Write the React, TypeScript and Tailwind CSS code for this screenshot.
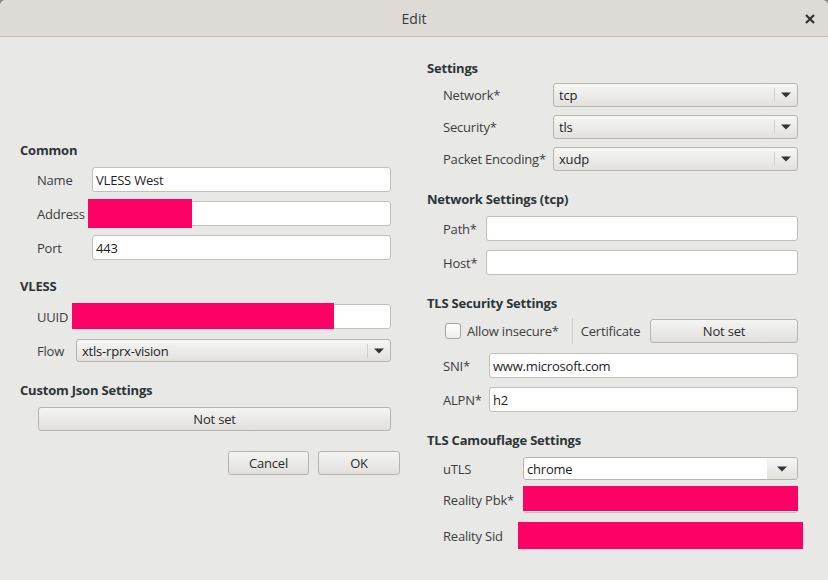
import type { ReactNode } from "react"

const font = { fontFamily: '"Open Sans", "Noto Sans", "DejaVu Sans", sans-serif' }

function Header({ children, className = "" }: { children: ReactNode; className?: string }) {
  return (
    <div className={`h-4 leading-4 text-[13px] font-bold tracking-[-0.2px] text-[#2e3436] ${className}`}>{children}</div>
  )
}

function Label({ children, w }: { children: ReactNode; w: string }) {
  return (
    <div className={`${w} relative top-px shrink-0 whitespace-nowrap text-[13px] tracking-[-0.2px] text-[#3d3d3d]`}>
      {children}
    </div>
  )
}

function Input({ value = "", className = "" }: { value?: string; className?: string }) {
  return (
    <div className={`flex h-[25px] flex-1 items-center rounded-[3px] border border-[#c2beb9] bg-white pl-[3px] text-[13px] tracking-[-0.2px] text-[#1e1e1e] ${className}`}>
      <span className="relative top-px">{value}</span>
    </div>
  )
}

function Arrow() {
  return (
    <svg width="10" height="6" viewBox="0 0 10 6" className="shrink-0">
      <path d="M0 0.5 H10 L5 5.5 Z" fill="#2e3436" />
    </svg>
  )
}

function Combo({ value, className = "" }: { value: string; className?: string }) {
  return (
    <div className={`flex h-6 flex-1 items-center rounded-[3px] border border-[#b7b3ae] bg-linear-to-b from-[#f6f6f5] to-[#e2e1de] pl-[5px] text-[13px] tracking-[-0.2px] text-[#1e1e1e] ${className}`}>
      <span className="relative top-px">{value}</span>
      <span className="ml-auto h-[14px] w-px bg-[#d3cfca]" />
      <span className="mx-[6px] flex items-center">
        <Arrow />
      </span>
    </div>
  )
}

function Button({ children, className = "" }: { children: ReactNode; className?: string }) {
  return (
    <div className={`flex h-6 items-center justify-center rounded-[3px] border border-[#b7b3ae] bg-linear-to-b from-[#f4f4f3] to-[#e1e0dd] text-[13px] tracking-[-0.2px] text-[#2b2b2b] ${className}`}>
      <span className="relative top-px">{children}</span>
    </div>
  )
}

function Redacted({ className = "" }: { className?: string }) {
  return <div className={`bg-[#ff0066] ${className}`} />
}

export default function App() {
  return (
    <div style={font} className="h-[580px] w-[828px] overflow-hidden bg-[#8c8c8c]">
      <div className="flex h-full flex-col overflow-hidden rounded-t-[6px] bg-[#e8e8e7]">
        {/* Title bar */}
        <div className="relative flex h-[37px] shrink-0 items-center justify-center border-b border-[#c4bdb3] bg-[#dedbd7]">
          <span className="text-[14px] text-[#363a3c]">Edit</span>
          <svg width="10" height="10" viewBox="0 0 10 10" className="absolute right-[13px] top-[14px]">
            <path d="M1 1 L9 9 M9 1 L1 9" stroke="#2e3436" strokeWidth="2.2" />
          </svg>
        </div>

        <div className="flex flex-1 items-start">
          {/* Left column */}
          <div className="ml-5 flex w-[371px] flex-col pt-[105px]">
            <Header>Common</Header>
            <div className="mt-[9px] flex items-center pl-[17px]">
              <Label w="w-[55px]">Name</Label>
              <Input value="VLESS West" />
            </div>
            <div className="relative mt-[9px] flex items-center pl-[17px]">
              <Label w="w-[55px]">Address</Label>
              <Input />
              <Redacted className="absolute left-[68px] top-[-2px] h-[29px] w-[104px]" />
            </div>
            <div className="mt-[9px] flex items-center pl-[17px]">
              <Label w="w-[55px]">Port</Label>
              <Input value="443" />
            </div>

            <Header className="mt-[18px]">VLESS</Header>
            <div className="relative mt-[10px] flex items-center pl-[17px]">
              <Label w="w-[39px]">UUID</Label>
              <Input />
              <Redacted className="absolute left-[52px] top-[-1px] h-[26px] w-[262px]" />
            </div>
            <div className="mt-[10px] flex items-center pl-[17px]">
              <Label w="w-[39px]">Flow</Label>
              <Combo value="xtls-rprx-vision" className="h-[23px]" />
            </div>

            <Header className="mt-5">Custom Json Settings</Header>
            <div className="mt-[9px] pl-[18px]">
              <Button>Not set</Button>
            </div>

            <div className="-mr-[9px] mt-5 flex justify-end gap-[9px]">
              <Button className="w-[81px]">Cancel</Button>
              <Button className="w-[82px]">OK</Button>
            </div>
          </div>

          {/* Right column */}
          <div className="ml-[36px] flex w-[371px] flex-col pt-[23px]">
            <Header>Settings</Header>
            <div className="mt-[7px] flex items-center pl-4">
              <Label w="w-[110px]">Network*</Label>
              <Combo value="tcp" />
            </div>
            <div className="mt-2 flex items-center pl-4">
              <Label w="w-[110px]">Security*</Label>
              <Combo value="tls" />
            </div>
            <div className="mt-2 flex items-center pl-4">
              <Label w="w-[110px]">Packet Encoding*</Label>
              <Combo value="xudp" />
            </div>

            <Header className="mt-5">Network Settings (tcp)</Header>
            <div className="mt-[9px] flex items-center pl-4">
              <Label w="w-[43px]">Path*</Label>
              <Input />
            </div>
            <div className="mt-[9px] flex items-center pl-4">
              <Label w="w-[43px]">Host*</Label>
              <Input />
            </div>

            <Header className="mt-5">TLS Security Settings</Header>
            <div className="mt-2 flex h-6 items-center pl-[18px]">
              <span className="h-4 w-4 shrink-0 rounded-[3px] border border-[#a9a5a0] bg-linear-to-b from-white to-[#eeeeec]" />
              <span className="relative top-px ml-[6px] text-[13px] tracking-[-0.2px] text-[#3d3d3d]">Allow insecure*</span>
              <span className="ml-[13px] h-[26px] w-px bg-[#cfcbc6]" />
              <span className="relative top-px ml-2 text-[13px] tracking-[-0.2px] text-[#3d3d3d]">Certificate</span>
              <Button className="ml-auto w-[148px]">Not set</Button>
            </div>
            <div className="mt-[10px] flex items-center pl-4">
              <Label w="w-[46px]">SNI*</Label>
              <Input value="www.microsoft.com" />
            </div>
            <div className="mt-[9px] flex items-center pl-4">
              <Label w="w-[46px]">ALPN*</Label>
              <Input value="h2" />
            </div>

            <Header className="mt-5">TLS Camouflage Settings</Header>
            <div className="mt-[9px] flex items-center pl-4">
              <Label w="w-[80px]">uTLS</Label>
              <div className="flex h-[23px] flex-1 overflow-hidden rounded-[3px] border border-[#b7b3ae] text-[13px] tracking-[-0.2px] text-[#1e1e1e]">
                <div className="flex flex-1 items-center bg-white pl-[3px]">
                  <span className="relative top-px">chrome</span>
                </div>
                <div className="flex w-[30px] items-center justify-center bg-linear-to-b from-[#f6f6f5] to-[#e2e1de]">
                  <Arrow />
                </div>
              </div>
            </div>
            <div className="relative mt-[6px] flex items-center pl-4">
              <Label w="w-[80px]">Reality Pbk*</Label>
              <Input className="h-[27px]" />
              <Redacted className="absolute left-[96px] right-0 top-0 h-[25px]" />
            </div>
            <div className="-mr-[5px] mt-[9px] flex items-center pl-4">
              <Label w="w-[75px]">Reality Sid</Label>
              <Redacted className="h-[27px] flex-1" />
            </div>
          </div>
        </div>
      </div>
    </div>
  )
}
